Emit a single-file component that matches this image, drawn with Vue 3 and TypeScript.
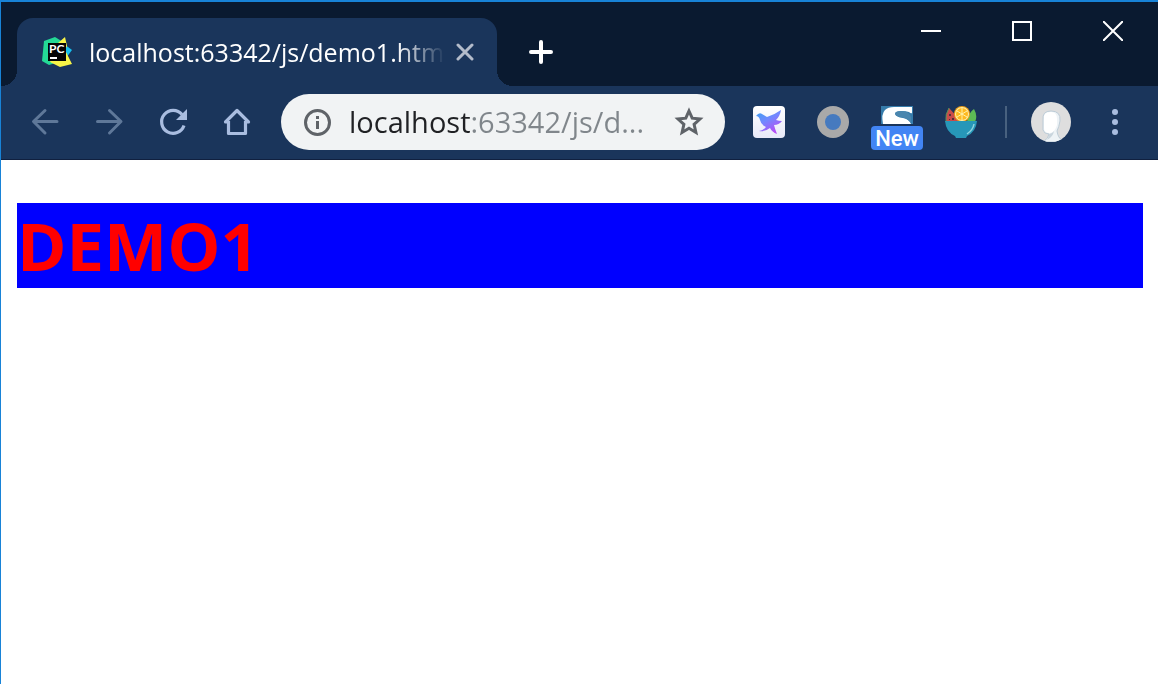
<script setup lang="ts">
import { ref } from 'vue'

const address = ref<string>('localhost:63342/js/d...')
const tabTitle: string = 'localhost:63342/js/demo1.htm'
</script>

<template>
  <div class="window">
    <header class="tab-strip">
      <div class="tab" role="tab" aria-selected="true">
        <svg class="favicon" viewBox="0 0 32 32" aria-hidden="true">
          <path d="M3 5 L14 1 L22 6 L21 25 L8 29 L1 25 Z" fill="#24d996" />
          <path d="M23 8 L31 14 L25 22 Z" fill="#16bfef" />
          <path d="M17 7 L24 1 L26 10 L24 14 L31 28 L19 31 L9 26 L13 18 Z" fill="#f8f447" />
          <rect x="7" y="7" width="18" height="18" fill="#050505" />
          <rect x="9" y="21" width="7" height="2" fill="#fff" />
          <text x="8" y="17" font-size="12" font-weight="700" fill="#fff" font-family="Lato, sans-serif">PC</text>
        </svg>
        <span class="tab-title">{{ tabTitle }}</span>
        <button class="icon-button tab-close" type="button" aria-label="Close tab">
          <svg width="18" height="18" viewBox="0 0 18 18" stroke="#b3bccb" stroke-width="3" stroke-linecap="round">
            <path d="M2 2 L16 16 M16 2 L2 16" />
          </svg>
        </button>
      </div>
      <button class="icon-button new-tab" type="button" aria-label="New tab">
        <svg width="24" height="24" viewBox="0 0 24 24" stroke="#fff" stroke-width="4" stroke-linecap="round">
          <path d="M2 12 H22 M12 2 V22" />
        </svg>
      </button>
      <div class="window-controls">
        <button class="icon-button" type="button" aria-label="Minimize">
          <svg width="20" height="20" viewBox="0 0 20 20"><rect y="9" width="20" height="2" fill="#fff" /></svg>
        </button>
        <button class="icon-button" type="button" aria-label="Maximize">
          <svg width="20" height="20" viewBox="0 0 20 20"><rect x="1" y="1" width="18" height="18" fill="none" stroke="#fff" stroke-width="2" /></svg>
        </button>
        <button class="icon-button" type="button" aria-label="Close">
          <svg width="20" height="20" viewBox="0 0 20 20"><path d="M0 0 L20 20 M20 0 L0 20" stroke="#fff" stroke-width="2" /></svg>
        </button>
      </div>
    </header>

    <nav class="toolbar" aria-label="Browser toolbar">
      <div class="navigation">
        <button class="icon-button" type="button" aria-label="Back" disabled>
          <svg width="32" height="32" viewBox="0 0 32 32" fill="none" stroke="#5f7899" stroke-width="3" stroke-linecap="round" stroke-linejoin="round">
            <path d="M28 15.500 H5 M16 4.500 L4.500 15.500 L16 27" />
          </svg>
        </button>
        <button class="icon-button" type="button" aria-label="Forward" disabled>
          <svg width="32" height="32" viewBox="0 0 32 32" fill="none" stroke="#5f7899" stroke-width="3" stroke-linecap="round" stroke-linejoin="round">
            <path d="M4.500 15.500 H27 M16.500 4.500 L28 15.500 L16.500 27" />
          </svg>
        </button>
        <button class="icon-button" type="button" aria-label="Reload">
          <svg width="32" height="32" viewBox="0 0 32 32">
            <path d="M27 19.500 A11.500 11.500 0 1 1 25 8.500" fill="none" stroke="#a9bde0" stroke-width="3.200" />
            <path d="M30 3 V14 H19 Z" fill="#a9bde0" />
          </svg>
        </button>
        <button class="icon-button" type="button" aria-label="Home">
          <svg width="32" height="32" viewBox="0 0 32 32" fill="none" stroke="#a9bde0" stroke-width="3.200" stroke-linejoin="round">
            <path d="M7.500 15 V27.500 H24.500 V15" />
            <path d="M7 16 H4.500 L16 4.500 L27.500 16 H25" />
          </svg>
        </button>
      </div>

      <div class="omnibox">
        <button class="icon-button" type="button" aria-label="View site information">
          <svg width="28" height="28" viewBox="0 0 28 28">
            <circle cx="14.500" cy="14.500" r="12" fill="none" stroke="#5f6368" stroke-width="3" />
            <path d="M13 8 H16 V11 H13 Z M13 13 H16 V21 H13 Z" fill="#5f6368" />
          </svg>
        </button>
        <input v-model="address" class="address" type="text" aria-label="Address and search bar" spellcheck="false" />
        <button class="icon-button" type="button" aria-label="Bookmark this page">
          <svg width="32" height="32" viewBox="0 0 32 32">
            <path d="M16 5 L19.200 12.200 L27 13 L21.100 18.300 L22.900 26.500 L16 22.300 L9.100 26.500 L10.900 18.300 L5 13 L12.800 12.200 Z" fill="none" stroke="#5f6368" stroke-width="3" />
          </svg>
        </button>
      </div>

      <div class="extensions">
        <button class="icon-button" type="button" aria-label="Bird extension">
          <svg width="32" height="32" viewBox="0 0 32 32">
            <defs>
              <linearGradient id="bird" x1="0" y1="0" x2="0.600" y2="1">
                <stop offset="0" stop-color="#35a2ee" /><stop offset="0.500" stop-color="#7387ff" /><stop offset="1" stop-color="#b64df5" />
              </linearGradient>
              <linearGradient id="tile" x1="0" y1="0" x2="0" y2="1">
                <stop offset="0" stop-color="#fff" /><stop offset="1" stop-color="#e7e9f8" />
              </linearGradient>
            </defs>
            <rect width="32" height="32" rx="4" fill="url(#tile)" />
            <path d="M3 10 Q6 6 9 8 L14 11 Q21 9 28 4 Q27 10 23 14 Q26 15 29 15 Q26 19 21 19 Q22 23 24 28 Q19 26 17 22 Q12 26 6 25 Q11 24 13 21 Q8 19 7 14 Q6 10 3 10 Z" fill="url(#bird)" />
          </svg>
        </button>
        <button class="icon-button" type="button" aria-label="Circle extension">
          <svg width="32" height="32" viewBox="0 0 32 32">
            <circle cx="16" cy="16" r="16" fill="#a9a9a9" /><circle cx="16" cy="16" r="8" fill="#467abf" />
          </svg>
        </button>
        <button class="icon-button badged" type="button">
          <svg width="32" height="32" viewBox="0 0 32 32" aria-hidden="true">
            <rect width="32" height="18" fill="#367cab" />
            <path d="M2 18 Q0 8 4 4 Q7 1 13 1 H31 V7 Q30 8 28 6 Q25 5 20 5 Q14 5 14 8 Q15 11 22 12 Q28 13 30 18 Z" fill="#fff" />
            <path d="M14 7 Q16 5 21 5 Q28 5 30 11 V17 Q26 12 20 11 Q14 10 14 7 Z" fill="#4a86ae" />
          </svg>
          <span class="badge">New</span>
        </button>
        <button class="icon-button" type="button" aria-label="Fruit bowl extension">
          <svg width="32" height="32" viewBox="0 0 32 32">
            <path d="M1 16 Q0 8 4 2 L17 16 Z" fill="#c94b4a" />
            <path d="M1 16 Q0 8 4 2" fill="none" stroke="#52975a" />
            <path d="M22 16 Q23 7 29 3 Q33 10 30 16 Z" fill="#5dbb55" />
            <circle cx="17" cy="8" r="8" fill="#ed9c16" />
            <circle cx="17" cy="8" r="7" fill="#fff0aa" />
            <circle cx="17" cy="8" r="6" fill="#ffb91f" />
            <path d="M17 2 V14 M12 5 L22 11 M22 5 L12 11" stroke="#fff0aa" />
            <path d="M4 8 H6 V10 H4 Z M7 12 H9 V14 H7 Z M4 13 H5 V14 H4 Z" fill="#513139" />
            <path d="M0 15 H32 Q31 26 22 30 L21 32 H11 L10 30 Q1 26 0 15 Z" fill="#2797b8" />
            <path d="M29 18 Q28 24 22 28" fill="none" stroke="#8ed3e0" stroke-width="1.500" />
          </svg>
        </button>
      </div>

      <div class="profile-area">
        <span class="divider"></span>
        <button class="icon-button" type="button" aria-label="Profile">
          <svg width="40" height="40" viewBox="0 0 40 40">
            <defs><clipPath id="avatar"><circle cx="20" cy="20" r="20" /></clipPath></defs>
            <g clip-path="url(#avatar)">
              <rect width="40" height="40" fill="#dedede" />
              <path d="M12 18 Q11 9 20 9 Q30 9 29 19 Q28 25 26 29 Q27 36 31 38 V40 H12 Q18 36 18 32 Q13 32 12 28 Z" fill="#eef3f6" stroke="#bccbd6" />
              <path d="M13 17 Q12 10 20 10 Q26 10 26 17 V23 Q24 30 19 31 Q13 31 13 26 Z" fill="#fff" />
              <path d="M18 32 Q21 32 23 29 Q22 35 16 38 Q18 35 18 32 Z" fill="#c9d5dd" />
            </g>
          </svg>
        </button>
        <button class="icon-button" type="button" aria-label="Browser menu">
          <svg width="6" height="26" viewBox="0 0 6 26" fill="#a9bde0">
            <circle cx="3" cy="3" r="3" /><circle cx="3" cy="13" r="3" /><circle cx="3" cy="23" r="3" />
          </svg>
        </button>
      </div>
    </nav>

    <main class="page">
      <h1>DEMO1</h1>
    </main>
  </div>
</template>

<style>
body {
  margin: 0;
  background: #fff;
}
</style>

<style scoped>
* {
  box-sizing: border-box;
}

.window {
  min-height: 100vh;
  display: flex;
  flex-direction: column;
  border-top: 2px solid #1883d7;
  border-left: 1px solid #1883d7;
  font-family: "Open Sans", "Noto Sans", sans-serif;
}

.icon-button {
  display: flex;
  align-items: center;
  justify-content: center;
  padding: 0;
  border: 0;
  background: transparent;
}

.icon-button svg {
  display: block;
  flex: none;
}

.tab-strip {
  display: flex;
  height: 84px;
  padding: 16px 0 0 16px;
  background: #0a1a30;
}

.tab {
  position: relative;
  display: flex;
  align-items: center;
  width: 480px;
  padding: 0 23px 0 24px;
  border-radius: 16px 16px 0 0;
  background: #1a355b;
}

.tab::before,
.tab::after {
  content: "";
  position: absolute;
  bottom: 0;
  width: 16px;
  height: 16px;
}

.tab::before {
  right: 100%;
  background: radial-gradient(circle at 0 0, transparent 16px, #1a355b 16px);
}

.tab::after {
  left: 100%;
  background: radial-gradient(circle at 100% 0, transparent 16px, #1a355b 16px);
}

.favicon {
  width: 32px;
  height: 32px;
  flex: none;
}

.tab-title {
  width: 360px;
  margin-left: 16px;
  white-space: nowrap;
  color: #fff;
  font-size: 25px;
  line-height: 36px;
  -webkit-mask-image: linear-gradient(to right, #000 308px, transparent 356px);
  mask-image: linear-gradient(to right, #000 308px, transparent 356px);
}

.tab-close {
  width: 18px;
  margin-left: auto;
}

.new-tab {
  width: 88px;
}

.window-controls {
  display: flex;
  height: 58px;
  margin: -16px 0 0 auto;
}

.window-controls .icon-button {
  width: 91px;
}

.toolbar {
  display: flex;
  align-items: center;
  height: 74px;
  padding: 0 40px 2px 28px;
  border-bottom: 1px solid #10203f;
  background: #1a355b;
}

.navigation {
  display: flex;
  gap: 32px;
}

.omnibox {
  display: flex;
  flex: 1;
  align-items: center;
  min-width: 0;
  height: 56px;
  margin: 0 28px;
  padding: 0 20px 0 22px;
  border-radius: 28px;
  background: #f1f3f4;
}

.address {
  flex: 1;
  min-width: 0;
  height: 40px;
  margin: 0 24px 0 18px;
  padding: 0;
  border: 0;
  outline: 0;
  font-family: inherit;
  font-size: 29px;
  background: linear-gradient(to right, #202124 121px, #80868b 121px);
  -webkit-background-clip: text;
  background-clip: text;
  color: transparent;
}

.extensions {
  display: flex;
  gap: 32px;
}

.badged {
  position: relative;
}

.badge {
  position: absolute;
  top: 20px;
  left: -10px;
  width: 52px;
  height: 24px;
  border-radius: 4px;
  background: #4285f4;
  color: #fff;
  font-family: Roboto, sans-serif;
  font-size: 22px;
  font-weight: 500;
  line-height: 26px;
  text-align: center;
}

.profile-area {
  display: flex;
  align-items: center;
  margin-left: 28px;
}

.divider {
  width: 2px;
  height: 32px;
  margin-right: 24px;
  background: #48617f;
}

.profile-area .icon-button + .icon-button {
  margin-left: 41px;
}

.page {
  flex: 1;
  padding: 43px 15px 16px 16px;
  background: #fff;
}

h1 {
  margin: 0;
  background: #00f;
  color: #f00;
  font-size: 67px;
  font-weight: 700;
  line-height: 85px;
}
</style>
